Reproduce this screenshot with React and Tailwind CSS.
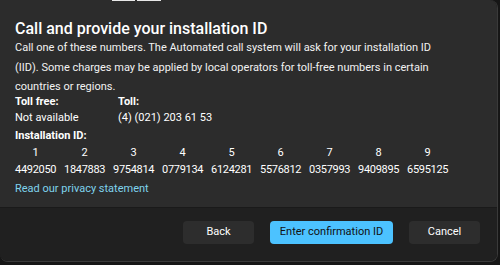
import React from 'react'

const ids = ['4492050', '1847883', '9754814', '0779134', '6124281', '5576812', '0357993', '9409895', '6595125']

const App = () => {
  return (
    <div className="w-[500px] h-[265px] bg-[#161616] relative overflow-hidden" style={{ fontFamily: 'Roboto, "Noto Sans", sans-serif' }}>
      <div className="absolute top-0 left-[112px] w-[23px] h-px bg-[#e8e8e8]" />
      <div className="absolute top-0 left-[137px] w-[24px] h-px bg-[#e8e8e8]" />
      <div className="w-[498px] h-[262px] flex flex-col rounded-tr-lg rounded-b-lg overflow-hidden border-r border-b border-[#3a3a3a]">
        <div className="h-[207px] bg-[#2c2c2c] pl-[15px] pr-4 pt-[18px] text-[#ffffff]">
          <h1 className="text-[16px] font-medium leading-[22px]">Call and provide your installation ID</h1>
          <p className="text-[11px] leading-[19.5px] mt-[-2px] text-[#f2f2f2] w-[422px]">
            Call one of these numbers. The Automated call system will ask for your installation ID (IID). Some charges may be applied by local operators for toll-free numbers in certain countries or regions.
          </p>
          <div className="flex mt-[-3px] text-[11px] leading-[16px]">
            <div className="w-[103px]">
              <div className="font-bold">Toll free:</div>
              <div>Not available</div>
            </div>
            <div>
              <div className="font-bold">Toll:</div>
              <div>(4) (021) 203 61 53</div>
            </div>
          </div>
          <div className="mt-[2px] text-[11px] leading-[16px] font-bold">Installation ID:</div>
          <div className="grid grid-cols-[repeat(9,49px)] text-[11px] leading-[17px]">
            {ids.map((id, i) => (
              <div key={id} className="flex flex-col items-start">
                <div className="w-[41px] text-center">{i + 1}</div>
                <div className="tracking-[-0.3px]">{id}</div>
              </div>
            ))}
          </div>
          <a href="#" className="block mt-[2px] text-[11px] leading-[18px] text-[#7fd3ec]">Read our privacy statement</a>
        </div>
        <div className="flex-1 bg-[#202020] border-t border-[#1a1a1a] flex items-start justify-end pt-[13px] pr-[17px] gap-4 text-[11px]">
          <button className="w-[71px] h-[23px] rounded-[4px] bg-[#2d2d2d] text-white">Back</button>
          <button className="w-[123px] h-[23px] rounded-[4px] bg-[#4cc2ff] text-[#111]">Enter confirmation ID</button>
          <button className="w-[71px] h-[23px] rounded-[4px] bg-[#2d2d2d] text-white">Cancel</button>
        </div>
      </div>
    </div>
  )
}

export default App
